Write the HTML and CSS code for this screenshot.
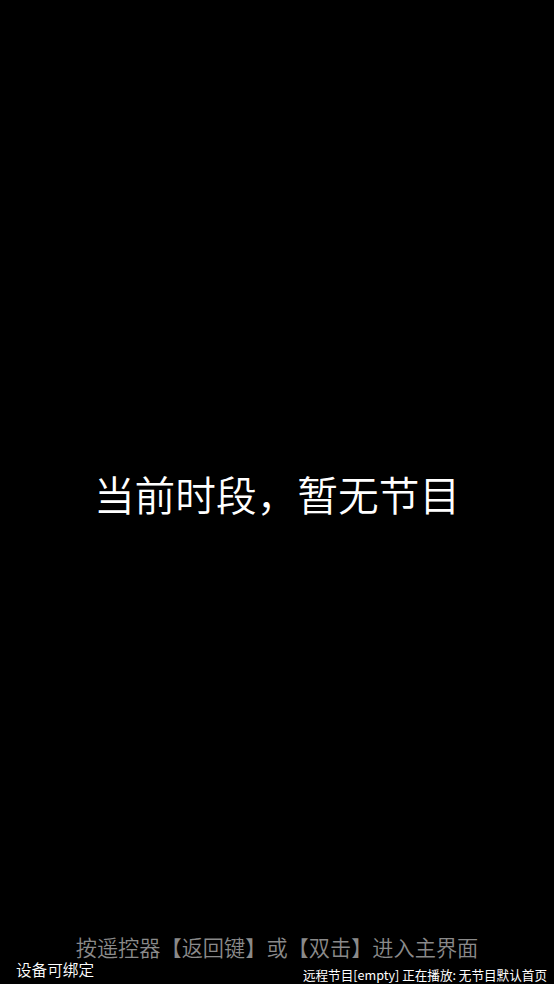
FILE: index.html
```html
<!DOCTYPE html>
<html lang="zh-CN">
<head>
<meta charset="utf-8">
<title>当前时段，暂无节目</title>
<link rel="stylesheet" href="styles.css">
</head>
<body>
<div class="page">
  <div class="title">当前时段，暂无节目</div>
  <div class="spacer"></div>
  <div class="hint">按遥控器【返回键】或【双击】进入主界面</div>
  <div class="footer">
    <span class="status-left">设备可绑定</span>
    <span class="status-right">远程节目[empty] 正在播放: 无节目默认首页</span>
  </div>
</div>
</body>
</html>
```
FILE: styles.css
```css
html, body {
  margin: 0;
  padding: 0;
  background: #000;
}
body {
  font-family: "Noto Sans CJK SC", "Noto Sans", sans-serif;
  color: #fff;
}
.page {
  height: 984px;
  display: flex;
  flex-direction: column;
  box-sizing: border-box;
  padding-bottom: 2px;
}
.title {
  margin-top: 473px;
  height: 42px;
  line-height: 42px;
  font-size: 40.7px;
  font-weight: 350;
  text-align: center;
  color: #fff;
}
.spacer {
  flex: 1;
}
.hint {
  font-size: 21.2px;
  line-height: 22px;
  font-weight: 350;
  text-align: center;
  color: #8a8a8a;
}
.footer {
  display: flex;
  justify-content: space-between;
  align-items: flex-end;
  padding: 0 7px 0 16px;
  margin-top: 3px;
}
.status-left {
  font-size: 15.6px;
  line-height: 16px;
  font-weight: 350;
  margin-bottom: 5px;
}
.status-right {
  font-size: 12.6px;
  line-height: 14px;
}
```
